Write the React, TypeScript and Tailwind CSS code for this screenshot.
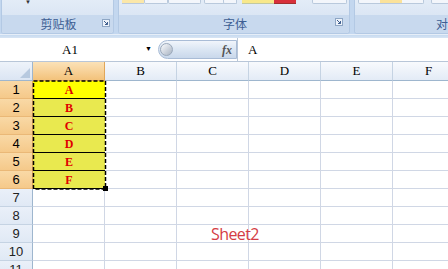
import React from "react";

const cols = ["A", "B", "C", "D", "E", "F"];
const rows = [1, 2, 3, 4, 5, 6, 7, 8, 9, 10, 11];
const letters = ["A", "B", "C", "D", "E", "F"];

function Launcher() {
  return (
    <svg width="8" height="8" viewBox="0 0 8 8" className="shrink-0">
      <rect x="0.5" y="0.5" width="7" height="7" fill="#eef3fa" stroke="#8ea6c4" />
      <path d="M2 2 L5.5 5.5 M5.5 3 V5.5 H3" stroke="#3f5f8f" strokeWidth="1" fill="none" />
    </svg>
  );
}

export default function App() {
  return (
    <div
      className="relative w-[448px] h-[269px] overflow-hidden bg-white flex flex-col"
      style={{ fontFamily: '"Liberation Sans", "Noto Sans CJK SC", sans-serif' }}
    >
      {/* Ribbon */}
      <div className="h-[34px] shrink-0 flex bg-[#c3d7ef] pl-[1px] gap-[4px]">
        {/* Group 1 */}
        <div className="w-[113px] shrink-0 flex flex-col rounded-b-[3px] border border-t-0 border-[#b3c9e4] bg-[#dfe9f5] overflow-hidden">
          <div className="h-[15px] relative bg-gradient-to-b from-[#e3ecf7] to-[#dbe6f4]">
            <span className="absolute left-[23px] top-[-1px] text-[6px] leading-none text-[#333]">▼</span>
          </div>
          <div className="flex-1 flex items-center bg-[#c8d9ee] relative">
            <span className="flex-1 text-center text-[12px] leading-none text-[#3d5e93] pl-[2px]" style={{ fontFamily: '"Noto Sans CJK SC", sans-serif' }}>剪贴板</span>
            <div className="absolute right-[3px] top-[4px]"><Launcher /></div>
          </div>
        </div>
        {/* Group 2 */}
        <div className="w-[232px] shrink-0 flex flex-col rounded-b-[3px] border border-t-0 border-[#b3c9e4] bg-[#dfe9f5] overflow-hidden">
          <div className="h-[15px] relative bg-gradient-to-b from-[#e3ecf7] to-[#dbe6f4]">
            <div className="absolute left-[3px] top-0 w-[22px] h-[4px] bg-[#fbe7a8] border-b border-[#b9c9dc]" />
            <div className="absolute left-[25px] top-0 w-[24px] h-[4px] border border-t-0 border-[#b9c9dc] rounded-b-[2px] bg-[#f3f6fb]" />
            <div className="absolute left-[49px] top-0 w-[33px] h-[4px] border border-t-0 border-[#b9c9dc] rounded-b-[2px] bg-[#f3f6fb]" />
            <div className="absolute left-[85px] top-0 w-[33px] h-[4px] border border-t-0 border-[#b9c9dc] rounded-b-[2px] bg-[#f3f6fb]" />
            <div className="absolute left-[104px] top-0 w-[14px] h-[4px] border border-t-0 border-[#b9c9dc] rounded-b-[2px] bg-[#f3f6fb]" />
            <div className="absolute left-[123px] top-0 w-[32px] h-[4px] bg-[#f8e88a] border-b border-[#c2c9a0]" />
            <div className="absolute left-[155px] top-0 w-[22px] h-[4px] bg-[#d8303a] border-b border-[#a03030]" />
            <div className="absolute left-[193px] top-0 w-[35px] h-[4px] border border-t-0 border-[#b9c9dc] rounded-b-[2px] bg-[#f3f6fb]" />
          </div>
          <div className="flex-1 flex items-center bg-[#c8d9ee] relative">
            <span className="flex-1 text-center text-[12px] leading-none text-[#3d5e93] pl-[2px]" style={{ fontFamily: '"Noto Sans CJK SC", sans-serif' }}>字体</span>
            <div className="absolute right-[6px] top-[3px]"><Launcher /></div>
          </div>
        </div>
        {/* Group 3 */}
        <div className="flex-1 flex flex-col rounded-bl-[3px] border border-t-0 border-r-0 border-[#b3c9e4] bg-[#dfe9f5] overflow-hidden">
          <div className="h-[15px] relative bg-gradient-to-b from-[#e3ecf7] to-[#dbe6f4]">
            <div className="absolute left-[3px] top-0 w-[66px] h-[4px] border border-t-0 border-[#b9c9dc] rounded-b-[2px] bg-[#f3f6fb]" />
            <div className="absolute left-[25px] top-0 w-[22px] h-[3px] bg-[#fbe29a]" />
            <div className="absolute left-[76px] top-0 w-[30px] h-[4px] border border-t-0 border-[#b9c9dc] rounded-b-[2px] bg-[#f3f6fb]" />
          </div>
          <div className="flex-1 flex items-center bg-[#c8d9ee] relative">
            <span className="absolute left-[81px] whitespace-nowrap text-[12px] leading-none text-[#3d5e93]" style={{ fontFamily: '"Noto Sans CJK SC", sans-serif' }}>对齐方式</span>
          </div>
        </div>
      </div>
      {/* band */}
      <div className="h-[4px] shrink-0 bg-gradient-to-b from-[#c6daf0] to-[#d8e5f4] border-t border-[#e6eef8]" />

      {/* Formula bar */}
      <div className="h-[24px] shrink-0 flex items-center bg-white border-b border-[#b8c6d8]">
        <div className="w-[155px] h-full flex items-center relative">
          <span className="absolute left-[62px] top-[4px] text-[13px] leading-[15px] text-black" style={{ fontFamily: '"Liberation Serif", serif' }}>A1</span>
          <span className="absolute left-[145px] top-[7px] text-[7px] leading-none text-black">▼</span>
        </div>
        <div className="w-[79px] h-[19px] ml-[3px] rounded-l-full flex items-center justify-between bg-gradient-to-b from-[#f1f5fb] via-[#dbe6f3] to-[#c9d8eb] border border-[#a9bcd6] pr-[4px]">
          <div className="w-[13px] h-[13px] ml-[1px] rounded-full bg-gradient-to-br from-[#fbfcfe] to-[#a9b4c3] border border-[#9aa8ba]" />
          <span className="text-[12px] italic font-bold text-[#555] leading-none" style={{ fontFamily: '"Liberation Serif", serif' }}>fx</span>
        </div>
        <div className="flex-1 h-full flex items-center border-l border-[#b8c6d8] pl-[10px]">
          <span className="text-[13px] text-black" style={{ fontFamily: '"Liberation Serif", serif' }}>A</span>
        </div>
      </div>

      {/* Sheet */}
      <div className="flex flex-col">
        {/* Header row */}
        <div className="flex h-[19px] shrink-0">
          <div className="w-[33px] shrink-0 relative bg-gradient-to-b from-[#eef3fa] to-[#dbe5f3] border-r border-b border-[#9eb6ce]">
            <svg className="absolute right-[2px] bottom-[2px]" width="10" height="10" viewBox="0 0 10 10">
              <path d="M10 0 L10 10 L0 10 Z" fill="#b7c9df" />
            </svg>
          </div>
          {cols.map((c) => (
            <div
              key={c}
              className={
                c === "A"
                  ? "w-[72px] shrink-0 flex items-center justify-center bg-gradient-to-b from-[#fbe2b8] to-[#f3c27a] border-r border-b border-[#e0a65a] text-[13px] text-black"
                  : "w-[72px] shrink-0 flex items-center justify-center bg-gradient-to-b from-[#f8fafd] to-[#e3ebf6] border-r border-[#c5d3e3] border-b border-b-[#9eb6ce] text-[13px] text-black"
              }
              style={{ fontFamily: '"Liberation Serif", serif' }}
            >
              {c}
            </div>
          ))}
        </div>
        {rows.map((r) => (
          <div key={r} className="flex h-[18px] shrink-0">
            <div
              className={
                r <= 6
                  ? "w-[33px] shrink-0 flex items-center justify-center bg-gradient-to-b from-[#f9d9a6] to-[#f5c98a] border-r border-[#e0a65a] border-b border-b-[#eab877] text-[13px] text-black"
                  : "w-[33px] shrink-0 flex items-center justify-center bg-gradient-to-b from-[#eaf0f9] to-[#e0e9f5] border-r border-[#9eb6ce] border-b border-b-[#c5d3e3] text-[13px] text-[#222]"
              }
            >
              {r}
            </div>
            {cols.map((c) => {
              if (c === "A" && r <= 6) {
                return (
                  <div
                    key={c}
                    className={
                      (r === 1 ? "bg-[#ffff00] " : "bg-[#e9e94f] ") +
                      "w-[72px] shrink-0 flex items-center justify-center border-b border-black text-[12px] font-bold text-[#e00000]"
                    }
                    style={{ fontFamily: '"Liberation Serif", serif' }}
                  >
                    {letters[r - 1]}
                  </div>
                );
              }
              return (
                <div
                  key={c}
                  className="w-[72px] shrink-0 border-r border-b border-[#d0d7e5] bg-white"
                />
              );
            })}
          </div>
        ))}
      </div>

      {/* Selection marching ants */}
      <svg className="absolute left-[32px] top-[80px]" width="76" height="112" viewBox="0 0 76 112">
        <rect x="1.5" y="1" width="72" height="108" fill="none" stroke="#000" strokeWidth="1.5" strokeDasharray="4 2" />
        <rect x="71" y="106" width="5" height="5" fill="#000" />
      </svg>

      {/* Sheet2 label */}
      <div className="absolute left-[211px] top-[226px] text-[16px] leading-none text-[#d43c44]" style={{ fontFamily: '"Open Sans", sans-serif', letterSpacing: "-0.6px" }}>
        Sheet2
      </div>
    </div>
  );
}
